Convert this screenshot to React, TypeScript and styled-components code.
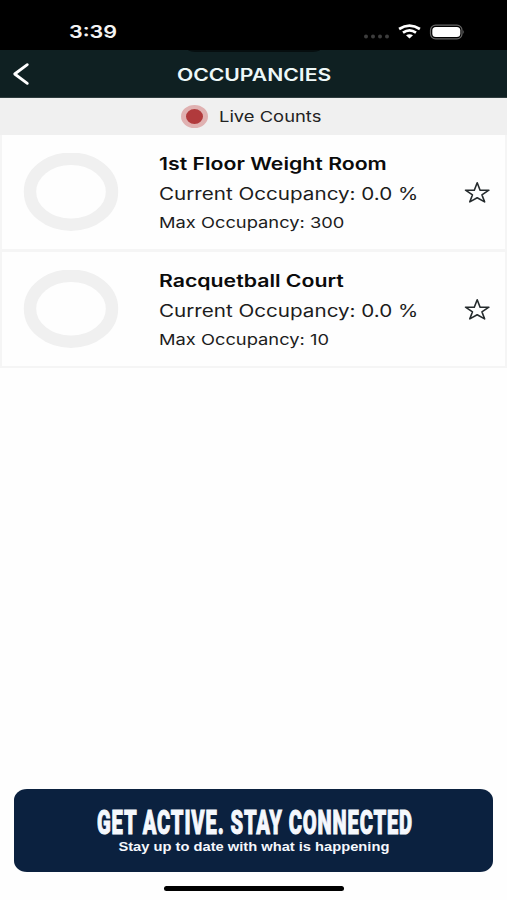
import React from "react";
import styled, { createGlobalStyle } from "styled-components";

const GlobalStyle = createGlobalStyle`
  * { box-sizing: border-box; }
  body { margin: 0; background: #fefefe; }
`;

const Screen = styled.div`
  width: 507px;
  height: 900px;
  display: flex;
  flex-direction: column;
  background: #fefefe;
  font-family: Inter, "Liberation Sans", sans-serif;
  overflow: hidden;
`;

const Label = styled.span<{ $size: number; $line: number; $stretch: number; $weight?: number; $from?: string }>`
  display: block;
  width: max-content;
  white-space: nowrap;
  font-size: ${(p) => p.$size}px;
  line-height: ${(p) => p.$line}px;
  font-weight: ${(p) => p.$weight ?? 400};
  transform: scaleX(${(p) => p.$stretch});
  transform-origin: ${(p) => p.$from ?? "left"} center;
`;

const StatusBar = styled.div`
  height: 50px;
  flex: none;
  display: flex;
  align-items: flex-start;
  justify-content: space-between;
  padding: 21px 42px 0 69px;
  background: #000;
  color: #f4f4f4;
`;

const StatusIcons = styled.div`
  display: flex;
  align-items: flex-start;
`;

const Header = styled.header`
  position: relative;
  height: 48px;
  flex: none;
  display: grid;
  grid-template-columns: 61px 1fr 60px;
  align-items: center;
  justify-items: center;
  padding-top: 2px;
  background: #0f2022;
  color: #eef8f8;
  border-bottom: 1px solid #2e3c3e;
`;

const NotchEdge = styled.div`
  position: absolute;
  top: 0;
  left: 188px;
  width: 132px;
  height: 2px;
  background: #060e0f;
  border-radius: 0 0 12px 12px / 0 0 2px 2px;
`;

const BackButton = styled.button`
  justify-self: start;
  display: flex;
  border: 0;
  padding: 0;
  margin: 0 0 1px 12px;
  background: none;
`;

const LiveBar = styled.div`
  height: 37px;
  flex: none;
  display: flex;
  align-items: center;
  padding: 0 0 0 181px;
  gap: 11px;
  background: #f0f0f0;
  color: #222;
`;

const LiveDot = styled.span`
  width: 27px;
  height: 23px;
  margin-bottom: 1px;
  border-radius: 50%;
  border: solid #e0b1b1;
  border-width: 4px 5px;
  background: #b13a3c;
`;

const List = styled.div`
  display: flex;
  flex-direction: column;
  gap: 3px;
  padding: 0 2px 2px;
  background: #f5f5f5;
`;

const Card = styled.article`
  height: 114px;
  display: grid;
  grid-template-columns: 157px 1fr 42px;
  background: #fefefe;
`;

const RingIcon = styled.svg`
  margin: 18px 0 0 21px;
`;

const Details = styled.div`
  padding-top: 18px;
  color: #1c1c1c;
`;

const Name = styled.div`
  color: #0b0b0b;
`;

const StarIcon = styled.svg`
  margin-top: 46px;
`;

const Banner = styled.footer`
  margin: auto 14px 0;
  height: 83px;
  flex: none;
  display: flex;
  flex-direction: column;
  align-items: center;
  padding-top: 17px;
  border-radius: 13px / 11px;
  background: #0b213f;
  color: #f5f8fd;
`;

const Headline = styled(Label)`
  font-family: Roboto, sans-serif;
  letter-spacing: 1.4px;
  margin-left: 2px;
  -webkit-text-stroke: 1px #f5f8fd;
`;

const Tagline = styled(Label)`
  font-family: "Liberation Sans", sans-serif;
`;

const HomeIndicator = styled.div`
  width: 180px;
  height: 5px;
  flex: none;
  margin: 14px auto 9px;
  border-radius: 3px;
  background: #000;
`;

type Room = { name: string; percent: string; max: number };

const rooms: Room[] = [
  { name: "1st Floor Weight Room", percent: "0.0", max: 300 },
  { name: "Racquetball Court", percent: "0.0", max: 10 },
];

function RoomCard({ room }: { room: Room }) {
  return (
    <Card>
      <RingIcon width="96" height="78" viewBox="0 0 96 78">
        <ellipse cx="48" cy="38.7" rx="41" ry="33" fill="none" stroke="#f0f0f0" strokeWidth="12.4" />
      </RingIcon>
      <Details>
        <Name>
          <Label $size={17} $line={22} $weight={600} $stretch={1.25}>{room.name}</Label>
        </Name>
        <Label $size={17} $line={39} $stretch={1.213}>Current Occupancy: {room.percent} %</Label>
        <Label $size={15} $line={18} $stretch={1.22}>Max Occupancy: {room.max}</Label>
      </Details>
      <StarIcon width="28" height="24" viewBox="0 0 28 24">
        <path
          d="M14.2 1.8 L17.1 9.2 L25.9 9.2 L18.9 13.8 L21.6 20.9 L14.2 16.7 L6.8 20.9 L9.5 13.8 L2.5 9.2 L11.3 9.2 Z"
          fill="none"
          stroke="#252b2d"
          strokeWidth="1.6"
          strokeLinejoin="round"
        />
      </StarIcon>
    </Card>
  );
}

export default function App() {
  return (
    <>
      <GlobalStyle />
      <Screen>
        <StatusBar>
          <Label $size={17.5} $line={22} $weight={600} $stretch={1.23}>3:39</Label>
          <StatusIcons>
            <svg width="102" height="24" viewBox="0 0 102 24">
              <g fill="#3d3d3d">
                <circle cx="3" cy="15.5" r="2" />
                <circle cx="10" cy="15.5" r="2" />
                <circle cx="17" cy="15.5" r="2" />
                <circle cx="24" cy="15.5" r="2" />
              </g>
              <g fill="none" stroke="#fff" strokeWidth="2.7">
                <path d="M36.1 8 Q46.5 1.2 56.9 8" />
                <path d="M40 11.6 Q46.5 7 53 11.6" />
              </g>
              <path d="M43 14.3 Q46.5 12 50 14.3 L46.5 17.4 Z" fill="#fff" />
              <rect x="67.5" y="4.2" width="31.5" height="13.6" rx="5" fill="none" stroke="#666" strokeWidth="1.2" />
              <rect x="69.3" y="6" width="28" height="10" rx="3.5" fill="#fff" />
              <path d="M100.3 9 Q102 10.8 100.3 13 Z" fill="#666" />
            </svg>
          </StatusIcons>
        </StatusBar>
        <Header>
          <NotchEdge />
          <BackButton aria-label="Back">
            <svg width="18" height="24" viewBox="0 0 18 24">
              <path d="M15.3 2.7 L2.7 12 L15.3 21.3" fill="none" stroke="#fff" strokeWidth="2.8" strokeLinecap="round" strokeLinejoin="round" />
            </svg>
          </BackButton>
          <Label $size={17} $line={22} $weight={600} $stretch={1.243} $from="center">OCCUPANCIES</Label>
        </Header>
        <LiveBar>
          <LiveDot />
          <Label $size={15} $line={20} $stretch={1.225}>Live Counts</Label>
        </LiveBar>
        <List>
          {rooms.map((room) => (
            <RoomCard key={room.name} room={room} />
          ))}
        </List>
        <Banner>
          <Headline $size={33} $line={34} $weight={900} $stretch={0.61} $from="center">GET ACTIVE. STAY CONNECTED</Headline>
          <Tagline $size={13} $line={14} $weight={700} $stretch={1.13} $from="center">Stay up to date with what is happening</Tagline>
        </Banner>
        <HomeIndicator />
      </Screen>
    </>
  );
}
